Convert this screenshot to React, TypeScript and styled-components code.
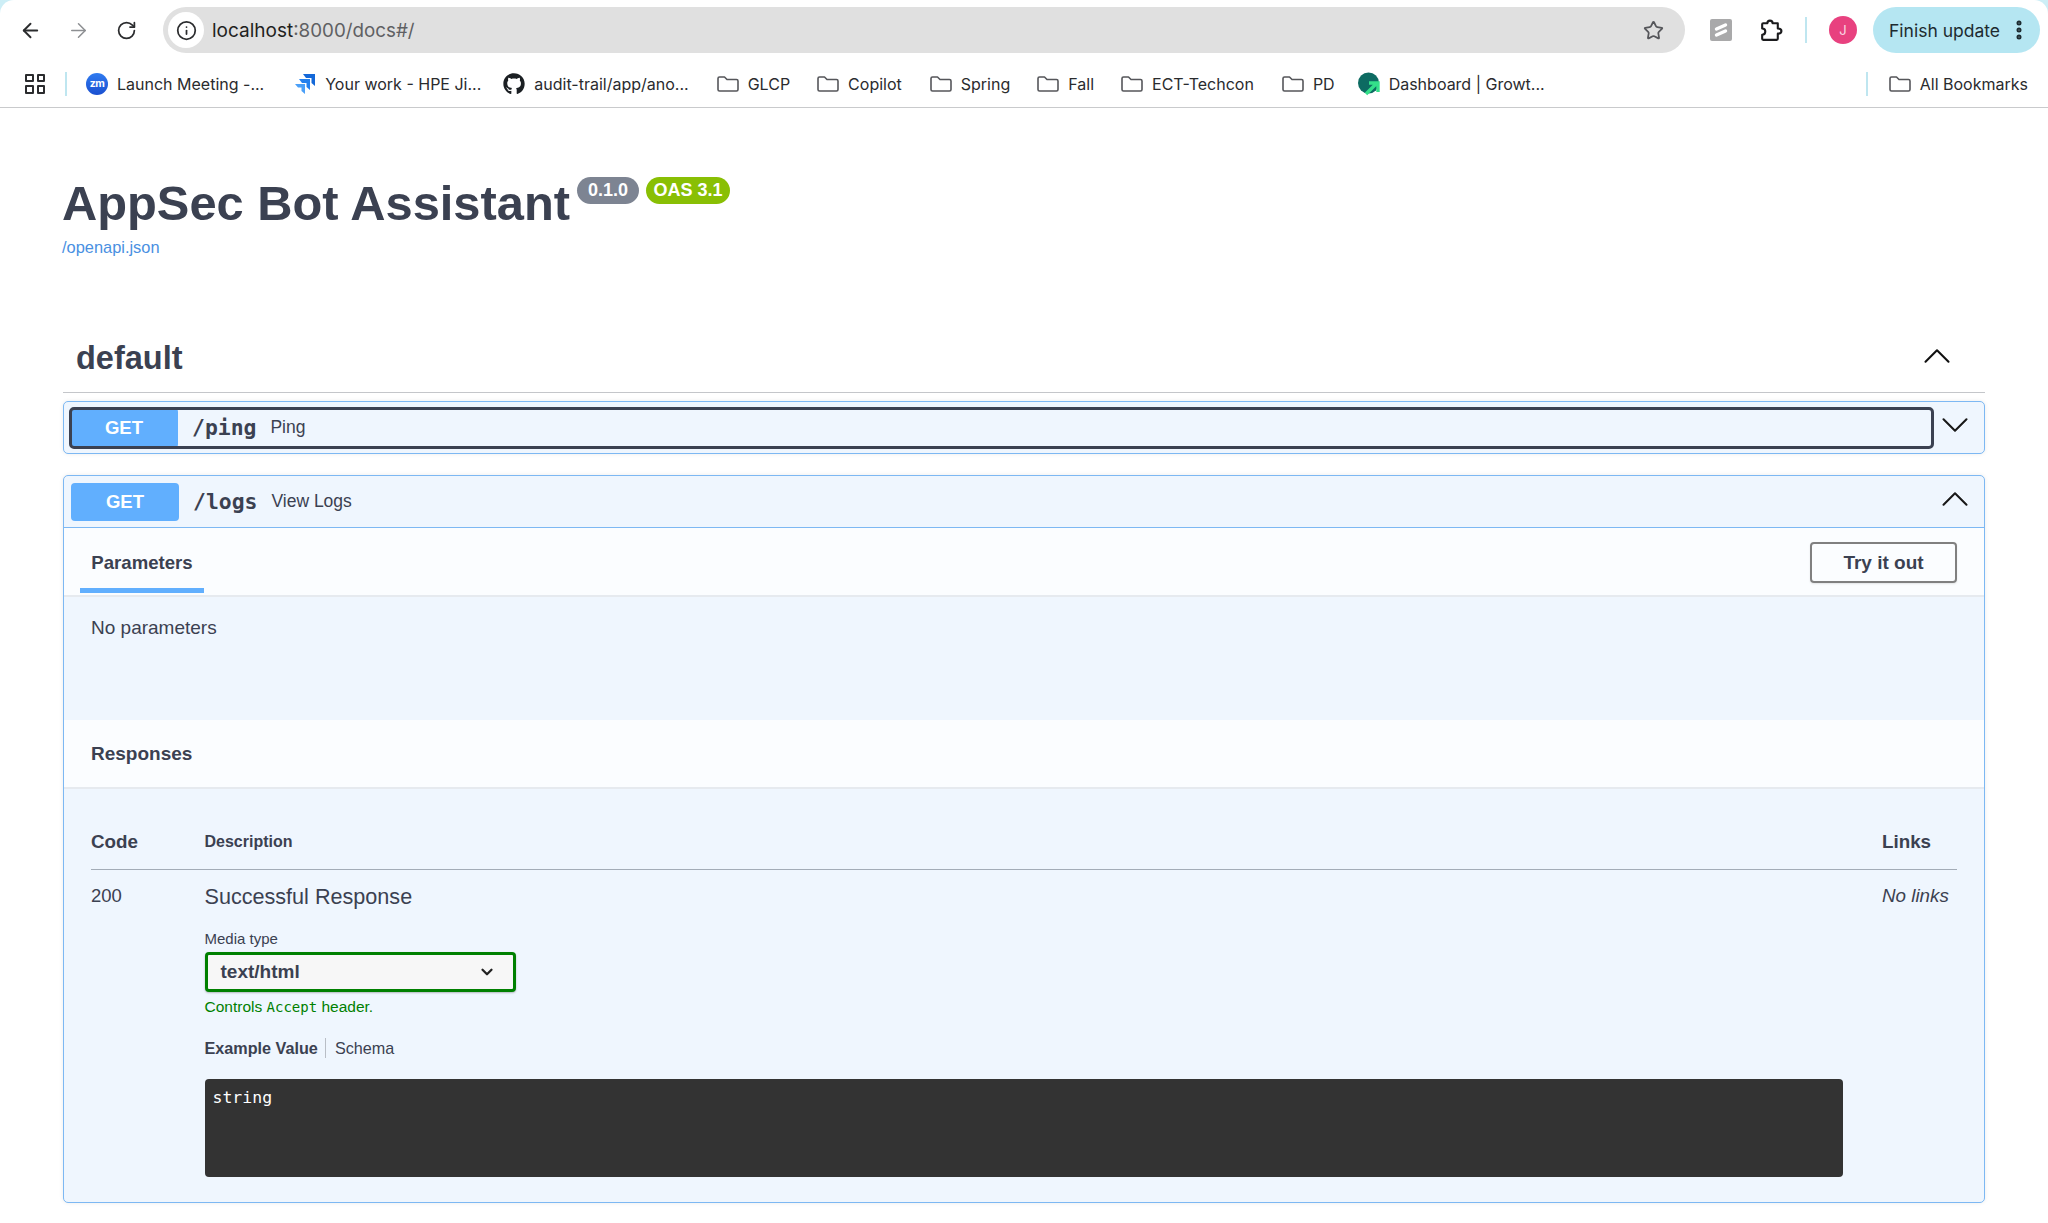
import React from 'react';
import styled, { createGlobalStyle } from 'styled-components';
import { ArrowLeft, ArrowRight, RotateCw, Info, Star, EllipsisVertical, ChevronUp, ChevronDown } from 'lucide-react';
import { FaGithub } from 'react-icons/fa';

const Global = createGlobalStyle`
  html, body { margin: 0; padding: 0; background: #fff; }
  body { width: 2048px; height: 1223px; overflow: hidden; font-family: "Liberation Sans", Arial, sans-serif; color: #3b4151; }
  * { box-sizing: border-box; }
`;

const Chrome = styled.header`
  height: 108px;
  border-bottom: 1px solid #c9cacc;
  background: #cdeef6;
  display: flex;
  flex-direction: column;
`;
const Toolbar = styled.div`
  height: 60px;
  padding-top: 7px;
  padding-right: 8px;
  display: flex;
  align-items: flex-start;
  background: #fff;
  border-radius: 14px 14px 0 0;
`;
const NavButton = styled.span<{ $muted?: boolean }>`
  width: 48px;
  height: 46px;
  display: flex;
  align-items: center;
  justify-content: center;
  color: ${p => (p.$muted ? '#8d8f92' : '#2b2c2e')};
`;
const NavGroup = styled.div`
  display: flex;
  padding-left: 6px;
  margin-right: 13px;
`;
const UrlBar = styled.div`
  width: 1523px;
  height: 46px;
  border-radius: 23px;
  background: #e0e0e0;
  display: flex;
  align-items: center;
  padding: 0 21px 0 5px;
`;
const InfoDisc = styled.span`
  width: 36px;
  height: 36px;
  border-radius: 50%;
  background: #fff;
  display: flex;
  align-items: center;
  justify-content: center;
  color: #2b2c2e;
  margin-right: 8px;
`;
const UrlText = styled.span`
  font-family: Inter, sans-serif;
  font-size: 18.8px;
  color: #5f6063;
  flex: 1;
`;
const UrlHost = styled.span`
  color: #1f1f21;
  font-size: 19px;
`;
const StarMark = styled.span`
  display: flex;
  color: #55565a;
`;
const Actions = styled.div`
  height: 46px;
  display: flex;
  align-items: center;
  margin-left: 25px;
`;
const ExtTile = styled.span`
  width: 22px;
  height: 22px;
  background: #a9a9aa;
  border-radius: 2px;
  display: flex;
  align-items: center;
  justify-content: center;
  margin-right: 26px;
`;
const PuzzleMark = styled.span`
  display: flex;
  color: #1b1b1d;
  margin-right: 22px;
`;
const ThinSep = styled.span<{ $h: number }>`
  width: 2px;
  height: ${p => p.$h}px;
  background: #bfe6f0;
`;
const Avatar = styled.span`
  width: 28px;
  height: 28px;
  border-radius: 50%;
  background: #e8417f;
  color: #f9d8e4;
  font-family: Inter, sans-serif;
  font-size: 13px;
  display: flex;
  align-items: center;
  justify-content: center;
  margin-left: 22px;
  margin-right: 16px;
`;
const UpdatePill = styled.span`
  height: 46px;
  width: 167px;
  border-radius: 23px;
  background: #b5e6f2;
  color: #1d2b30;
  font-family: Inter, sans-serif;
  font-size: 17.5px;
  display: flex;
  align-items: center;
  justify-content: space-between;
  padding: 0 9px 0 16px;
  white-space: nowrap;
`;
const Bookmarks = styled.nav`
  flex: 1;
  display: flex;
  align-items: center;
  padding: 0 20px 0 25px;
  font-family: Inter, sans-serif;
  font-size: 16px;
  color: #2a2b2e;
  background: #fff;
`;
const AppsGrid = styled.span`
  width: 20px;
  height: 20px;
  display: grid;
  grid-template-columns: 1fr 1fr;
  gap: 3px;
  margin-right: 20px;
`;
const AppsCell = styled.span`
  border: 2px solid #2b2c2e;
  border-radius: 1px;
`;
const Mark = styled.span<{ $after: number }>`
  display: flex;
  align-items: center;
  white-space: nowrap;
  gap: 9px;
  margin-right: ${p => p.$after}px;
`;
const FolderSvg = styled.svg`
  width: 22px;
  height: 16px;
  fill: none;
  stroke: #55565a;
  stroke-width: 1.6;
  stroke-linejoin: round;
`;
const ZoomDisc = styled.span`
  width: 22px;
  height: 22px;
  border-radius: 50%;
  background: linear-gradient(180deg, #2f7bf0, #1a4fd0);
  color: #fff;
  font-size: 10.5px;
  font-weight: 700;
  display: flex;
  align-items: center;
  justify-content: center;
  letter-spacing: -0.5px;
`;
const Spacer = styled.span`
  flex: 1;
`;
const BarSep = styled(ThinSep)`
  margin: 0 21px 0 14px;
`;
const FirstSep = styled(ThinSep)`
  margin-right: 19px;
`;

const Page = styled.main`
  padding: 0 63px;
`;
const Info2 = styled.section`
  height: 210px;
  padding-top: 76px;
`;
const TitleRow = styled.div`
  display: flex;
  align-items: flex-start;
`;
const Title = styled.h1`
  margin: -10px 0 0 -1px;
  font-size: 48.8px;
  line-height: 58px;
  font-weight: 700;
  color: #3b4151;
`;
const Badge = styled.span<{ $bg: string; $w: number }>`
  width: ${p => p.$w}px;
  height: 27px;
  border-radius: 14px;
  background: ${p => p.$bg};
  color: #fff;
  font-size: 18px;
  font-weight: 700;
  display: flex;
  align-items: center;
  justify-content: center;
  margin-left: 7px;
  margin-top: -7px;
`;
const SpecLink = styled.a`
  display: block;
  margin: 5px 0 0 -1px;
  font-size: 16.4px;
  line-height: 20px;
  color: #4990e2;
`;
const TagRow = styled.div`
  height: 75px;
  border-bottom: 1px solid #c4c6ca;
  display: flex;
  align-items: center;
  justify-content: space-between;
  padding: 7px 30px 0 13px;
`;
const TagName = styled.h2`
  margin: 0;
  font-size: 32.5px;
  font-weight: 700;
  color: #3b4151;
`;
const OpBlock = styled.article<{ $gap: number }>`
  margin-top: ${p => p.$gap}px;
  border: 1.5px solid #7db8f3;
  border-radius: 5px;
  background: #eff6fe;
  box-shadow: 0 0 4px rgba(0, 0, 0, 0.08);
  overflow: hidden;
`;
const OpHeader = styled.div<{ $open?: boolean }>`
  height: ${p => (p.$open ? 52 : 51)}px;
  display: flex;
  align-items: center;
  padding: 0 11px 0 ${p => (p.$open ? 7 : 6)}px;
  ${p => (p.$open ? 'border-bottom: 1.5px solid #7db8f3;' : '')}
`;
const OpFocus = styled.div<{ $focus?: boolean }>`
  flex: 1;
  height: ${p => (p.$focus ? 40 : 38)}px;
  display: flex;
  align-items: center;
  border-radius: 4px;
  ${p => (p.$focus ? 'outline: 3px solid #3b4151; outline-offset: -2px;' : '')}
`;
const Method = styled.span`
  width: 108px;
  height: 100%;
  border-radius: 4px;
  background: #61affe;
  color: #fff;
  font-size: 18.5px;
  font-weight: 700;
  display: flex;
  align-items: center;
  justify-content: center;
`;
const OpPath = styled.span`
  font-family: "DejaVu Sans Mono", monospace;
  font-size: 21.4px;
  font-weight: 700;
  margin-left: 14px;
  color: #3b4151;
`;
const OpSummary = styled.span`
  font-size: 17.5px;
  margin-left: 14px;
  color: #3b4151;
`;
const Caret = styled.span`
  width: 36px;
  height: 36px;
  display: flex;
  align-items: center;
  justify-content: center;
  color: #1a1a1a;
  margin: -5px 0 0 4px;
  svg { flex-shrink: 0; }
`;
const ParamHead = styled.div`
  height: 69px;
  background: #fbfdff;
  border-bottom: 2px solid #e6eaef;
  padding: 0 27px 0 16px;
  display: flex;
  justify-content: space-between;
  align-items: flex-start;
`;
const Tab = styled.span`
  width: 124px;
  height: 65px;
  border-bottom: 5px solid #61affe;
  font-size: 18.6px;
  font-weight: 700;
  display: flex;
  align-items: center;
  justify-content: center;
  color: #3b4151;
  padding-top: 10px;
`;
const TryButton = styled.button`
  width: 147px;
  height: 41px;
  margin-top: 14px;
  background: transparent;
  border: 2.5px solid #808080;
  border-radius: 4px;
  box-shadow: 0 1px 2px rgba(0, 0, 0, 0.1);
  font-family: "Liberation Sans", sans-serif;
  font-size: 19px;
  font-weight: 700;
  color: #3b4151;
`;
const NoParams = styled.div`
  height: 123px;
  padding: 20px 27px;
  font-size: 19px;
  line-height: 22px;
  color: #3b4151;
`;
const RespHead = styled.div`
  height: 69px;
  background: #fbfdff;
  border-bottom: 2px solid #e6eaef;
  padding: 0 27px;
  display: flex;
  align-items: center;
  font-size: 19px;
  font-weight: 700;
  color: #3b4151;
`;
const RespBody = styled.div`
  padding: 0 27px 25px;
`;
const TableHead = styled.div`
  height: 81px;
  display: grid;
  grid-template-columns: 113.5px 1fr 75px;
  align-items: end;
  padding-bottom: 16px;
  border-bottom: 1.5px solid #a3acb7;
  color: #3b4151;
  font-weight: 700;
`;
const HeadCode = styled.span`
  font-size: 18.8px;
  line-height: 22px;
`;
const HeadDesc = styled.span`
  font-size: 16px;
  line-height: 22px;
`;
const TableRow = styled.div`
  display: grid;
  grid-template-columns: 113.5px 1fr 75px;
  padding-top: 15px;
`;
const CodeCell = styled.span`
  font-size: 18.5px;
  line-height: 22px;
`;
const DescCell = styled.div`
  display: flex;
  flex-direction: column;
  align-items: flex-start;
`;
const RespText = styled.div`
  font-size: 21.6px;
  line-height: 28px;
  margin-top: -2px;
`;
const NoLinks = styled.em`
  font-size: 18.8px;
  line-height: 22px;
`;
const MediaLabel = styled.label`
  font-size: 15px;
  line-height: 20px;
  margin-top: 18px;
  margin-bottom: 3px;
`;
const Select = styled.div`
  width: 311px;
  height: 40px;
  border: 3px solid #008000;
  border-radius: 4px;
  background: #f7f7f7;
  box-shadow: 0 1px 2px rgba(0, 0, 0, 0.25);
  display: flex;
  align-items: center;
  justify-content: space-between;
  padding: 0 17px 0 13px;
  font-size: 19px;
  font-weight: 700;
  color: #3b4151;
`;
const Accept = styled.small`
  margin-top: 6px;
  font-size: 15.5px;
  line-height: 18px;
  color: #008000;
`;
const AcceptCode = styled.code`
  font-family: "DejaVu Sans Mono", monospace;
  font-size: 14px;
`;
const ExampleTabs = styled.div`
  display: flex;
  align-items: center;
  margin-top: 22px;
  height: 20px;
  font-size: 16.2px;
`;
const ExampleActive = styled.span`
  font-weight: 700;
  padding-right: 7px;
  border-right: 1px solid #b9bec6;
  line-height: 20px;
`;
const ExampleOther = styled.span`
  padding-left: 9px;
`;
const CodeBox = styled.pre`
  width: 1638px;
  height: 98px;
  margin: 21px 0 0;
  background: #333;
  border-radius: 4px;
  color: #fff;
  padding: 9px 8px;
  font-family: "DejaVu Sans Mono", monospace;
  font-size: 16.5px;
  font-weight: 500;
  line-height: 20px;
`;

const FolderIcon = () => (
  <FolderSvg viewBox="0 0 22 16">
    <path d="M1 2.5C1 1.7 1.7 1 2.5 1H7.5L10 3.5H19.5C20.3 3.5 21 4.2 21 5V13.5C21 14.3 20.3 15 19.5 15H2.5C1.7 15 1 14.3 1 13.5Z" />
  </FolderSvg>
);

const folders: [string, number][] = [['GLCP', 27], ['Copilot', 28], ['Spring', 27], ['Fall', 27], ['ECT-Techcon', 28], ['PD', 23]];

export default function App() {
  return (
    <>
      <Global />
      <Chrome>
        <Toolbar>
          <NavGroup>
            <NavButton><ArrowLeft size={23} strokeWidth={2} /></NavButton>
            <NavButton $muted><ArrowRight size={23} strokeWidth={1.6} /></NavButton>
            <NavButton><RotateCw size={21} strokeWidth={2} /></NavButton>
          </NavGroup>
          <UrlBar>
            <InfoDisc><Info size={21} strokeWidth={2} /></InfoDisc>
            <UrlText><UrlHost>localhost</UrlHost>:8000/docs#/</UrlText>
            <StarMark><Star size={21} strokeWidth={2} /></StarMark>
          </UrlBar>
          <Actions>
            <ExtTile>
              <svg width="16" height="16" viewBox="0 0 16 16"><path d="M3.5 7 L12.5 3 M3.5 13 L12.5 9" stroke="#fff" strokeWidth="3.4" strokeLinecap="round" fill="none" /></svg>
            </ExtTile>
            <PuzzleMark>
              <svg width="25" height="25" viewBox="0 0 24 24" fill="none" stroke="currentColor" strokeWidth="2" strokeLinejoin="round"><path d="M9 5C9 3.5 10 2.5 11.5 2.5S14 3.5 14 5H19V10C21 10 22.5 11 22.5 12.5S21 15 19 15V20C19 20.6 18.6 21 18 21H5C4.4 21 4 20.6 4 20V16C6 16 7 14.5 7 13S6 10 4 10V6C4 5.4 4.4 5 5 5Z" /></svg>
            </PuzzleMark>
            <ThinSep $h={26} />
            <Avatar>J</Avatar>
            <UpdatePill>Finish update<EllipsisVertical size={24} strokeWidth={3} /></UpdatePill>
          </Actions>
        </Toolbar>
        <Bookmarks>
          <AppsGrid><AppsCell /><AppsCell /><AppsCell /><AppsCell /></AppsGrid>
          <FirstSep $h={24} />
          <Mark $after={30}><ZoomDisc>zm</ZoomDisc>Launch Meeting -...</Mark>
          <Mark $after={22}>
            <svg width="22" height="22" viewBox="0 0 22 22"><path d="M9 1 H21 V13 L17.5 10 V5 H12 Z" fill="#1468d8" /><path d="M5 6 H16 V17 L12.5 14 V10 H8 Z" fill="#2581ee" /><path d="M1 11 H11 V21 L7.5 18 V14.5 H4 Z" fill="#4ba0f8" /></svg>
            Your work - HPE Ji...
          </Mark>
          <Mark $after={28}><FaGithub size={22} color="#1b1f23" />audit-trail/app/ano...</Mark>
          {folders.map(([name, after]) => (
            <Mark key={name} $after={after}><FolderIcon />{name}</Mark>
          ))}
          <Mark $after={0}>
            <svg width="22" height="24" viewBox="0 0 22 24"><circle cx="10.5" cy="11" r="10.5" fill="#0d6b62" /><path d="M8 22 L19 11 M11 11 H20 V20" stroke="#34e08a" strokeWidth="3.4" fill="none" /></svg>
            Dashboard | Growt...
          </Mark>
          <Spacer />
          <BarSep $h={24} />
          <Mark $after={0}><FolderIcon />All Bookmarks</Mark>
        </Bookmarks>
      </Chrome>
      <Page>
        <Info2>
          <TitleRow>
            <Title>AppSec Bot Assistant</Title>
            <Badge $bg="#7d8492" $w={62}>0.1.0</Badge>
            <Badge $bg="#89bf04" $w={84}>OAS 3.1</Badge>
          </TitleRow>
          <SpecLink>/openapi.json</SpecLink>
        </Info2>
        <TagRow>
          <TagName>default</TagName>
          <Caret><ChevronUp size={46} strokeWidth={1.1} color="#111" /></Caret>
        </TagRow>
        <OpBlock $gap={8}>
          <OpHeader>
            <OpFocus $focus>
              <Method>GET</Method>
              <OpPath>/ping</OpPath>
              <OpSummary>Ping</OpSummary>
            </OpFocus>
            <Caret><ChevronDown size={46} strokeWidth={1.1} /></Caret>
          </OpHeader>
        </OpBlock>
        <OpBlock $gap={21}>
          <OpHeader $open>
            <OpFocus>
              <Method>GET</Method>
              <OpPath>/logs</OpPath>
              <OpSummary>View Logs</OpSummary>
            </OpFocus>
            <Caret><ChevronUp size={46} strokeWidth={1.1} /></Caret>
          </OpHeader>
          <ParamHead>
            <Tab>Parameters</Tab>
            <TryButton>Try it out</TryButton>
          </ParamHead>
          <NoParams>No parameters</NoParams>
          <RespHead>Responses</RespHead>
          <RespBody>
            <TableHead>
              <HeadCode>Code</HeadCode>
              <HeadDesc>Description</HeadDesc>
              <HeadCode>Links</HeadCode>
            </TableHead>
            <TableRow>
              <CodeCell>200</CodeCell>
              <DescCell>
                <RespText>Successful Response</RespText>
                <MediaLabel>Media type</MediaLabel>
                <Select>text/html<ChevronDown size={18} strokeWidth={3} color="#222" /></Select>
                <Accept>Controls <AcceptCode>Accept</AcceptCode> header.</Accept>
                <ExampleTabs>
                  <ExampleActive>Example Value</ExampleActive>
                  <ExampleOther>Schema</ExampleOther>
                </ExampleTabs>
                <CodeBox>string</CodeBox>
              </DescCell>
              <NoLinks>No links</NoLinks>
            </TableRow>
          </RespBody>
        </OpBlock>
      </Page>
    </>
  );
}
